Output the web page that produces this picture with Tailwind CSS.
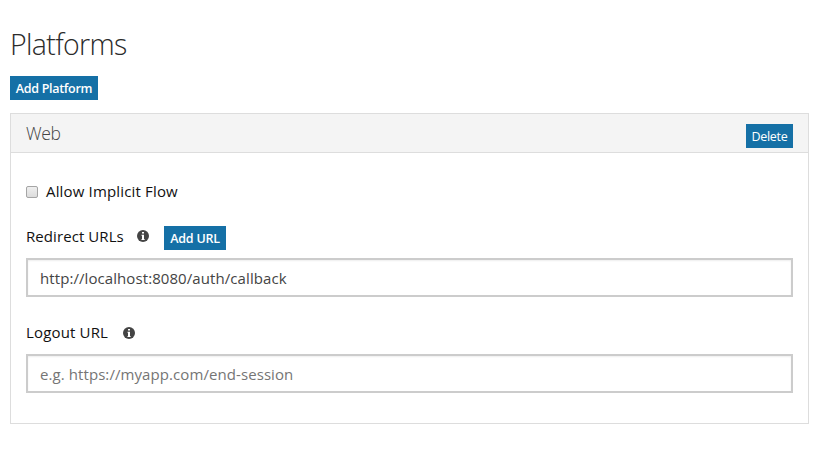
<!DOCTYPE html>
<html lang="en">
<head>
<meta charset="utf-8">
<title>Platforms</title>
<script src="https://cdn.jsdelivr.net/npm/@tailwindcss/browser@4"></script>
</head>
<body class="h-[449px] overflow-hidden bg-white px-[10px] pr-[9px] pt-[24px] font-['Open_Sans','Noto_Sans',sans-serif] text-black">
  <h1 class="h-[52px] whitespace-nowrap text-[28.5px] leading-[41px] font-light tracking-[-0.65px] text-[#2b2b2b]"><span>Platforms</span></h1>
  <button class="flex h-6 w-[88px] items-center justify-center bg-[#1570a6] pt-[2px] text-[12.5px] font-semibold tracking-[-0.3px] whitespace-nowrap text-white"><span>Add Platform</span></button>
  <section class="mt-[13px] h-[311px] border border-[#ddd]">
    <header class="flex h-[39px] items-start justify-between border-b border-[#ddd] bg-[#f4f4f4] px-[15px]">
      <h2 class="text-[17.5px] leading-[39px] font-light tracking-[-0.3px] text-[#444]"><span>Web</span></h2>
      <button class="mt-[10px] flex h-6 w-[47px] items-center justify-center bg-[#1570a6] pt-[2px] text-[12.5px] tracking-[-0.3px] whitespace-nowrap text-white"><span>Delete</span></button>
    </header>
    <div class="px-[15px] text-[15px] tracking-[0.08px]">
      <label class="flex h-[73px] items-center whitespace-nowrap pt-[4px] tracking-[0.16px] text-[#111]">
        <input type="checkbox" class="mr-2 size-3 shrink-0 appearance-none rounded-[2px] border border-[#a5a5a5] bg-linear-to-b from-[#efefef] to-[#dcdcdc]"><span>Allow Implicit Flow</span>
      </label>
      <div class="flex h-6 items-center whitespace-nowrap">
        <label class="-mt-1 w-[111px] leading-6 text-[#111]"><span>Redirect URLs</span></label>
        <svg class="-mt-[4px] size-3" viewBox="0 0 12 12"><circle cx="6" cy="6" r="6" fill="#444"/><path fill="#fff" d="M5 2h2v1.6H5zM4.5 4.8H7V9h.6v1H4.5V9H5V5.7h-.5z"/></svg>
        <button class="ml-[15px] flex h-6 w-[62px] items-center justify-center bg-[#1570a6] pt-[2px] text-[12.5px] font-semibold tracking-[-0.2px] text-white"><span>Add URL</span></button>
      </div>
      <div class="mt-2 flex h-[39px] items-center border-2 border-[#ccc] px-3 pt-px text-[#444] shadow-[inset_0_1px_2px_#eee]"><span>http://localhost:8080/auth/callback</span></div>
      <div class="mt-[24px] flex h-6 items-center whitespace-nowrap">
        <label class="-mt-[2px] w-[97px] tracking-[0.16px] text-[#111]"><span>Logout URL</span></label>
        <svg class="size-3" viewBox="0 0 12 12"><circle cx="6" cy="6" r="6" fill="#444"/><path fill="#fff" d="M5 2h2v1.6H5zM4.5 4.8H7V9h.6v1H4.5V9H5V5.7h-.5z"/></svg>
      </div>
      <div class="mt-[9px] flex h-[39px] items-center border-2 border-[#ccc] px-3 pt-px text-[#757575] shadow-[inset_0_1px_2px_#eee]"><span>e.g. https://myapp.com/end-session</span></div>
    </div>
  </section>
</body>
</html>
